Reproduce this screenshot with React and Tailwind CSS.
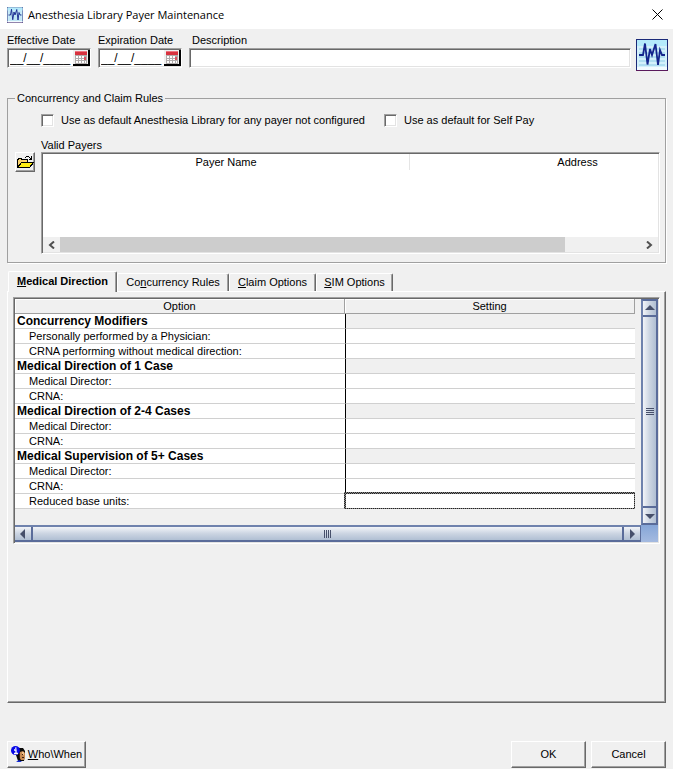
import React, { useState } from 'react';

const sunken =
  'border border-t-[#a0a0a0] border-l-[#a0a0a0] border-r-white border-b-white shadow-[inset_1px_1px_0_#696969,inset_-1px_-1px_0_#e3e3e3]';
const raised =
  'border border-t-white border-l-white border-r-[#696969] border-b-[#696969] shadow-[inset_-1px_-1px_0_#a0a0a0]';
const checker = 'bg-[repeating-conic-gradient(#222_0_25%,#888_0_50%)] bg-[length:2px_2px]';

const tabs = [
  { id: 'direction', before: '', key: 'M', after: 'edical Direction', width: 'w-[109px]' },
  { id: 'rules', before: 'Co', key: 'n', after: 'currency Rules', width: 'w-[112px]' },
  { id: 'claim', before: '', key: 'C', after: 'laim Options', width: 'w-[87px]' },
  { id: 'sim', before: '', key: 'S', after: 'IM Options', width: 'w-[77px]' },
];

const rows = [
  { label: 'Concurrency Modifiers', group: true },
  { label: 'Personally performed by a Physician:' },
  { label: 'CRNA performing without medical direction:' },
  { label: 'Medical Direction of 1 Case', group: true },
  { label: 'Medical Director:' },
  { label: 'CRNA:' },
  { label: 'Medical Direction of 2-4 Cases', group: true },
  { label: 'Medical Director:' },
  { label: 'CRNA:' },
  { label: 'Medical Supervision of 5+ Cases', group: true },
  { label: 'Medical Director:' },
  { label: 'CRNA:' },
  { label: 'Reduced base units:', active: true },
];

function PulseIcon({ className }) {
  return (
    <svg className={className} viewBox="0 0 32 32" aria-hidden="true">
      <rect width="32" height="32" fill="#1b2a78" />
      <rect x="1" y="1" width="30" height="30" fill="#d3f0fb" />
      <path d="M1 1h30v6H1z" fill="#b4eafb" />
      <path d="M3 10h26M3 14h26M3 18h26M3 22h26M3 26h26" stroke="#a5d8ee" strokeWidth="1.5" />
      <path d="M1 28h30v3H1z" fill="#f2fbff" />
      <path d="M0 31.500h32" stroke="#5a1a5c" />
      <path
        d="M3 16h4L9 4.500l2.500 21L14 10l2 6 3.500-11 2.500 21 2-15 2 5h3"
        fill="none"
        stroke="#14248c"
        strokeWidth="1.800"
      />
    </svg>
  );
}

function CalendarIcon() {
  return (
    <svg width="12" height="13" viewBox="0 0 12 13" shapeRendering="crispEdges" aria-hidden="true">
      <rect width="12" height="13" fill="#b0abab" />
      <rect width="12" height="4" fill="#d8323f" />
      <path d="M0 0h12v1H0z" fill="#ee7480" />
      <path d="M1 5h2v2H1zM4 5h2v2H4zM7 5h2v2H7zM1 8h2v1H1zM4 8h2v1H4zM7 8h2v1H7zM1 10h2v2H1zM4 10h2v2H4zM7 10h2v2H7zM10 10h1v2h-1z" fill="#fff" />
      <rect x="9" y="6" width="2" height="3" fill="#e05060" />
    </svg>
  );
}

function FolderIcon() {
  return (
    <svg width="17" height="14" viewBox="0 0 17 14" shapeRendering="crispEdges" aria-hidden="true">
      <path d="M0.500 12.500V4.500h1v-1h3v1h6v3h-6l-4 5z" fill="#fbd36b" stroke="#000" />
      <path d="M0.500 12.500l4-5h12l-4 5z" fill="#ffee12" stroke="#000" />
      <path d="M8 2h1v1H8zM9 1h3v1H9zM12 2h1v1h-1zM13 3h1v1h-1zM14 1h1v3h-1zM12 4h3v1h-3z" fill="#000" />
    </svg>
  );
}

function WhoIcon() {
  return (
    <svg width="15" height="17" viewBox="0 0 15 17" aria-hidden="true">
      <path d="M7 4l1-2h4l2 3v3l-1 7H7L5 9z" fill="#0a0a0a" />
      <path d="M9 6l3-1 2 2v5l-1 2h-3l-2-3z" fill="#c88a52" />
      <path d="M11 6h2v3h-2z" fill="#f0c08a" />
      <path d="M11 8h1v1h-1zM11 11h2v1h-2zM8 8h1v4H8z" fill="#3a1c10" />
      <path d="M5 16l3-2 3 2z" fill="#1028d8" />
      <circle cx="4.500" cy="4.500" r="4.500" fill="#0808e8" />
      <path d="M3 4h2v3M3 7.500h4M4 2.200h1.500" fill="none" stroke="#fff" strokeWidth="1.300" />
    </svg>
  );
}

function DateField({ id, label }) {
  return (
    <div className="w-[84px] pt-1">
      <label htmlFor={id} className="block leading-[15px] whitespace-nowrap">{label}</label>
      <div className={`flex h-5 bg-white py-px pl-px ${sunken}`}>
        <input id={id} defaultValue="__/__/____" className="min-w-0 flex-1 px-px text-[12px] outline-none" />
        <button
          aria-label={`Pick ${label}`}
          className="flex w-[17px] items-center justify-center border-r-2 border-b-2 border-black bg-[#f0f0f0]"
        >
          <CalendarIcon />
        </button>
      </div>
    </div>
  );
}

function Check({ id, label, className }) {
  return (
    <div className={`flex items-center gap-[7px] ${className}`}>
      <input id={id} type="checkbox" className={`size-[13px] shrink-0 appearance-none bg-white ${sunken}`} />
      <label htmlFor={id} className="whitespace-nowrap">{label}</label>
    </div>
  );
}

function Chevron({ d }) {
  return (
    <svg width="7" height="8" viewBox="0 0 7 8" fill="none" stroke="#505050" strokeWidth="2" aria-hidden="true">
      <path d={d} />
    </svg>
  );
}

function PayerList() {
  return (
    <div className={`flex h-[102px] min-w-0 flex-1 flex-col overflow-hidden bg-white p-px ${sunken}`}>
      <div className="flex-1 overflow-hidden">
        <table className="w-[702px] table-fixed border-separate border-spacing-0">
          <thead>
            <tr>
              <th className="h-4 w-[367px] border-r border-[#e5e5e5] p-0 text-center font-normal">Payer Name</th>
              <th className="h-4 p-0 text-center font-normal">Address</th>
            </tr>
          </thead>
        </table>
      </div>
      <div className="flex h-[15px] bg-[#f0f0f0]">
        <button aria-label="Scroll left" className="flex w-[17px] items-center justify-center">
          <Chevron d="M6 0.500L2 4l4 3.500" />
        </button>
        <div className="flex flex-1">
          <div className="w-[87%] bg-[#cdcdcd]" />
        </div>
        <button aria-label="Scroll right" className="flex w-[17px] items-center justify-center">
          <Chevron d="M1 0.500L5 4l-4 3.500" />
        </button>
      </div>
    </div>
  );
}

function Arrow({ points }) {
  return (
    <svg width="10" height="10" viewBox="0 0 10 10" aria-hidden="true">
      <polygon points={points} fill="#47506b" />
    </svg>
  );
}

function VerticalBar() {
  const face = 'bg-linear-to-r from-[#f2f4f8] via-[#ccd5e2] to-[#b0bfd3]';
  return (
    <div className="flex flex-col border-2 border-[#5a6c9a] border-l-[#6f82ad]">
      <button aria-label="Scroll up" className={`flex h-4 items-center justify-center border-b-2 border-[#5a6c9a] ${face}`}>
        <Arrow points="5,2 10,7 0,7" />
      </button>
      <div className={`flex flex-1 flex-col items-center justify-center gap-px ${face}`}>
        <i className="h-px w-2 bg-[#47506b]" />
        <i className="h-px w-2 bg-[#47506b]" />
        <i className="h-px w-2 bg-[#47506b]" />
        <i className="h-px w-2 bg-[#47506b]" />
      </div>
      <button aria-label="Scroll down" className={`flex h-[17px] items-center justify-center border-t-2 border-[#5a6c9a] ${face}`}>
        <Arrow points="0,3 10,3 5,8" />
      </button>
    </div>
  );
}

function HorizontalBar() {
  const face = 'bg-linear-to-b from-[#f2f4f8] via-[#ccd5e2] to-[#b0bfd3]';
  return (
    <div className="flex h-[17px] border-y-2 border-r border-[#5a6c9a] border-t-[#6f82ad]">
      <button aria-label="Scroll left" className={`flex w-[18px] items-center justify-center border-r-2 border-[#5a6c9a] ${face}`}>
        <Arrow points="7,0 7,10 2,5" />
      </button>
      <div className={`flex flex-1 items-center justify-center gap-px ${face}`}>
        <i className="h-2 w-px bg-[#47506b]" />
        <i className="h-2 w-px bg-[#47506b]" />
        <i className="h-2 w-px bg-[#47506b]" />
        <i className="h-2 w-px bg-[#47506b]" />
      </div>
      <button aria-label="Scroll right" className={`flex w-[18px] items-center justify-center border-l-2 border-[#5a6c9a] ${face}`}>
        <Arrow points="3,0 3,10 8,5" />
      </button>
    </div>
  );
}

function OptionsGrid() {
  const head = 'h-[15px] border-r border-b border-[#a0a0a0] p-0 text-center font-normal leading-[14px] shadow-[inset_1px_1px_0_#fff]';
  return (
    <div className={`grid grid-cols-[1fr_17px] p-px ${sunken}`}>
      <div className="pr-[6px] pb-4">
        <table className="w-full table-fixed border-separate border-spacing-0 leading-[14px]">
          <thead>
            <tr>
              <th className={`w-[330px] ${head}`}>Option</th>
              <th className={head}>Setting</th>
            </tr>
          </thead>
          <tbody>
            {rows.map((row, i) => (
              <tr key={i}>
                <td
                  className={`h-[15px] border-b border-[#d0d0d0] bg-white p-0 whitespace-nowrap ${
                    row.group ? 'pl-[2px] text-[12px] font-bold' : 'pl-[14px]'
                  }`}
                >
                  {row.label}
                </td>
                <td
                  className={`relative h-[15px] border-b border-l border-b-[#d0d0d0] border-l-black p-0 ${
                    row.group ? 'bg-[#f0f0f0]' : 'bg-white'
                  }`}
                >
                  {row.active && (
                    <div className={`absolute -top-[2px] right-0 -bottom-px -left-[2px] pt-[2px] pr-px pb-px pl-[2px] ${checker}`}>
                      <input aria-label={row.label} className="block h-full w-full bg-white px-1 outline-none" />
                    </div>
                  )}
                </td>
              </tr>
            ))}
          </tbody>
        </table>
      </div>
      <VerticalBar />
      <HorizontalBar />
      <div className="bg-linear-to-b from-[#86a6d8] to-[#a4bae0]" />
    </div>
  );
}

export default function App() {
  const [tab, setTab] = useState('direction');

  return (
    <div className="flex min-h-screen flex-col bg-[#f0f0f0] font-['Liberation_Sans',Arial,sans-serif] text-[11px] leading-[15px] text-black">
      <header className="flex h-[29px] items-center bg-white pr-2 pl-[7px]">
        <PulseIcon className="size-4" />
        <h1 className="flex-1 pl-[5px] font-['Open_Sans',sans-serif] text-[11px]">Anesthesia Library Payer Maintenance</h1>
        <button aria-label="Close" className="flex size-4 items-center justify-center">
          <svg width="11" height="11" viewBox="0 0 11 11" stroke="#000" aria-hidden="true">
            <path d="M0.500 0.500l10 10M10.500 0.500l-10 10" />
          </svg>
        </button>
      </header>

      <main className="flex flex-1 flex-col px-[7px] pb-px">
        <div className="-mr-[2px] flex gap-[7px]">
          <DateField id="effective" label="Effective Date" />
          <DateField id="expiration" label="Expiration Date" />
          <div className="flex-1 pt-1">
            <label htmlFor="description" className="block pl-[3px] leading-[15px]">Description</label>
            <input id="description" className={`block h-5 w-full bg-white px-1 outline-none ${sunken}`} />
          </div>
          <PulseIcon className="mt-[10px] -ml-[2px] size-8" />
        </div>

        <fieldset className="mt-5 min-w-0 border border-[#a0a0a0] pr-[5px] pb-2 pl-[7px] shadow-[1px_1px_0_#fff]">
          <legend className="px-[2px]">Concurrency and Claim Rules</legend>
          <div className="flex pt-[7px] pl-[26px]">
            <Check id="default-library" label="Use as default Anesthesia Library for any payer not configured" className="w-[343px]" />
            <Check id="self-pay" label="Use as default for Self Pay" className="" />
          </div>
          <div className="pt-[10px] pl-[26px] leading-[14px]">Valid Payers</div>
          <div className="flex items-start gap-[6px]">
            <button aria-label="Open payers" className={`flex size-5 shrink-0 items-center justify-center ${raised}`}>
              <FolderIcon />
            </button>
            <PayerList />
          </div>
        </fieldset>

        <div role="tablist" className="z-10 mt-2 flex items-end pl-px">
          {tabs.map((t) => (
            <button
              key={t.id}
              role="tab"
              aria-selected={tab === t.id}
              onClick={() => setTab(t.id)}
              className={`rounded-t-[2px] border-t border-r border-l border-t-white border-r-[#696969] border-l-white bg-[#f0f0f0] whitespace-nowrap shadow-[inset_-1px_0_0_#a0a0a0] ${t.width} ${
                tab === t.id ? '-mb-px h-[21px] pb-[2px] font-bold' : 'h-[18px]'
              }`}
            >
              {t.before}
              <span className="underline">{t.key}</span>
              {t.after}
            </button>
          ))}
        </div>
        <section role="tabpanel" className={`flex-1 px-[5px] pt-[5px] ${raised}`}>
          <OptionsGrid />
        </section>

        <footer className="mt-[38px] flex gap-[5px]">
          <button className={`flex h-[27px] w-[79px] items-center justify-center gap-[2px] ${raised}`}>
            <WhoIcon />
            <span><span className="underline">W</span>ho\When</span>
          </button>
          <div className="flex-1" />
          <button className={`h-[27px] w-[75px] ${raised}`}>OK</button>
          <button className={`h-[27px] w-[75px] ${raised}`}>Cancel</button>
        </footer>
      </main>
    </div>
  );
}
